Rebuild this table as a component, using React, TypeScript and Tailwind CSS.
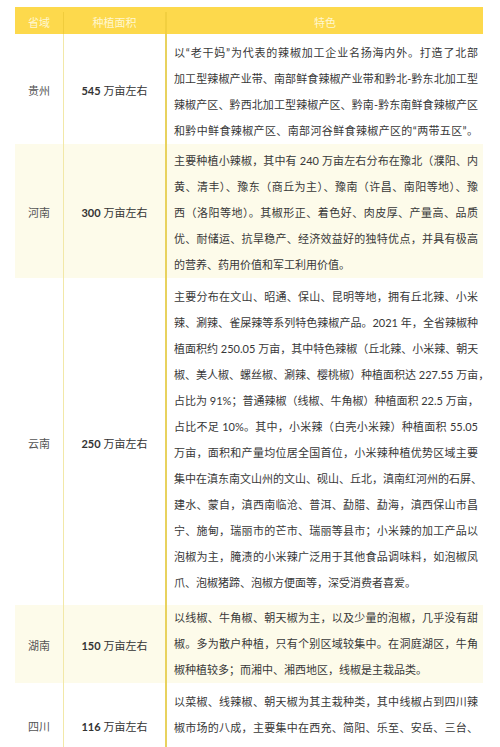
import React from "react";

type Row = {
  name: string;
  area: string;
  bg: string;
  pad: string;
  lines: string[];
  // the last line of these rows runs to the right edge too
  fullLast?: boolean;
};

const rows: Row[] = [
  {
    name: "贵州",
    area: "545",
    bg: "bg-white",
    pad: "pt-[6px] pb-0",
    fullLast: true,
    lines: [
      "以“老干妈”为代表的辣椒加工企业名扬海内外。打造了北部",
      "加工型辣椒产业带、南部鲜食辣椒产业带和黔北-黔东北加工型",
      "辣椒产区、黔西北加工型辣椒产区、黔南-黔东南鲜食辣椒产区",
      "和黔中鲜食辣椒产区、南部河谷鲜食辣椒产区的“两带五区”。",
    ],
  },
  {
    name: "河南",
    area: "300",
    bg: "bg-[#fdfbea]",
    pad: "pt-[4px] pb-0",
    lines: [
      "主要种植小辣椒，其中有 240 万亩左右分布在豫北（濮阳、内",
      "黄、清丰）、豫东（商丘为主）、豫南（许昌、南阳等地）、豫",
      "西（洛阳等地）。其椒形正、着色好、肉皮厚、产量高、品质",
      "优、耐储运、抗旱稳产、经济效益好的独特优点，并具有极高",
      "的营养、药用价值和军工利用价值。",
    ],
  },
  {
    name: "云南",
    area: "250",
    bg: "bg-white",
    pad: "pt-[6px] pb-[9px]",
    lines: [
      "主要分布在文山、昭通、保山、昆明等地，拥有丘北辣、小米",
      "辣、涮辣、雀屎辣等系列特色辣椒产品。2021 年，全省辣椒种",
      "植面积约 250.05 万亩，其中特色辣椒（丘北辣、小米辣、朝天",
      "椒、美人椒、螺丝椒、涮辣、樱桃椒）种植面积达 227.55 万亩，",
      "占比为 91%；普通辣椒（线椒、牛角椒）种植面积 22.5 万亩，",
      "占比不足 10%。其中，小米辣（白壳小米辣）种植面积 55.05",
      "万亩，面积和产量均位居全国首位，小米辣种植优势区域主要",
      "集中在滇东南文山州的文山、砚山、丘北，滇南红河州的石屏、",
      "建水、蒙自，滇西南临沧、普洱、勐腊、勐海，滇西保山市昌",
      "宁、施甸，瑞丽市的芒市、瑞丽等县市；小米辣的加工产品以",
      "泡椒为主，腌渍的小米辣广泛用于其他食品调味料，如泡椒凤",
      "爪、泡椒猪蹄、泡椒方便面等，深受消费者喜爱。",
    ],
  },
  {
    name: "湖南",
    area: "150",
    bg: "bg-[#fdfbea]",
    pad: "pt-0 pb-0",
    lines: [
      "以线椒、牛角椒、朝天椒为主，以及少量的泡椒，几乎没有甜",
      "椒。多为散户种植，只有个别区域较集中。在洞庭湖区，牛角",
      "椒种植较多；而湘中、湘西地区，线椒是主栽品类。",
    ],
  },
  {
    name: "四川",
    area: "116",
    bg: "bg-white",
    pad: "pt-[6px] pb-0",
    lines: [
      "以菜椒、线辣椒、朝天椒为其主栽种类，其中线椒占到四川辣",
      "椒市场的八成，主要集中在西充、简阳、乐至、安岳、三台、",
      "中江、宜宾、遂宁等地，是全国重要的辣椒产区之一。",
    ],
  },
];

const font = "font-['Lato','Noto_Sans_CJK_SC',sans-serif]";

export default function App() {
  return (
    <div className={`min-h-[747px] bg-white pt-[7px] pl-[15px] text-[11px] ${font}`}>
      <div className="w-[468px]">
        <div className="grid h-[27px] grid-cols-[48px_104px_316px] bg-[#fdd94c] pt-[5px] text-[#fff7d0]">
          <div className="flex items-center justify-center">省域</div>
          <div className="flex items-center justify-center border-l border-r-2 border-l-[#f0cc3c] border-r-[#f2cf40]">
            种植面积
          </div>
          <div className="flex items-center justify-center">特色</div>
        </div>

        {rows.map((row) => (
          <div key={row.name} className={`grid grid-cols-[48px_104px_316px] ${row.bg}`}>
            <div className="flex items-center justify-center pt-[5px] text-[#555555]">{row.name}</div>
            <div className="flex items-center justify-center border-l border-r-2 border-l-[#f2e8a8] border-r-[#e8d25e] pt-[5px] text-[#333333]">
              <span className="font-bold">{row.area}</span>
              <span className="ml-[3px]">万亩左右</span>
            </div>
            <div className={`pl-[7px] pr-[5px] leading-[26px] text-[#383838] ${row.pad}`}>
              {row.lines.map((line, i) => {
                const justify = i < row.lines.length - 1 || row.fullLast;
                return (
                  <div
                    key={i}
                    className={
                      justify
                        ? "whitespace-nowrap text-justify [text-align-last:justify]"
                        : "whitespace-nowrap"
                    }
                  >
                    {line}
                  </div>
                );
              })}
            </div>
          </div>
        ))}
      </div>
    </div>
  );
}
